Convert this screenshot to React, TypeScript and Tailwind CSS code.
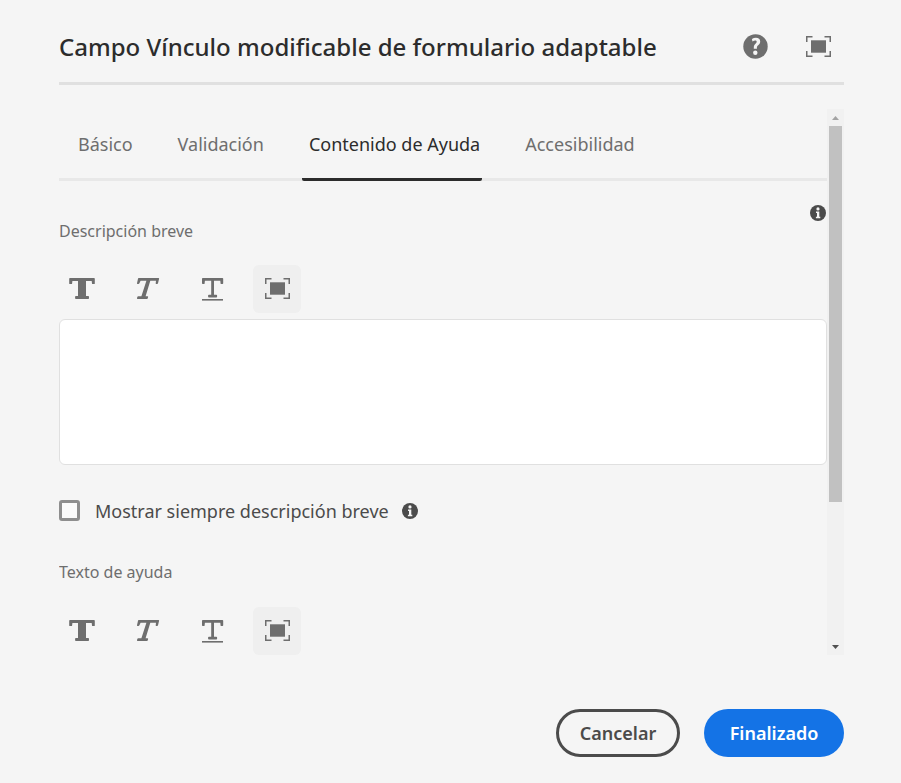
import React from "react";

function HelpIcon() {
  return (
    <svg width="26" height="26" viewBox="0 0 26 26" aria-hidden="true">
      <circle cx="12.500" cy="12.500" r="12.200" fill="#6e6e6e" />
      <path
        d="M8.900 5C10.200 4.200 11.500 3.800 12.900 3.800c2.600 0 4.300 1.400 4.300 3.600 0 1.700-.9 2.800-2 3.800-1 .9-1.300 1.400-1.300 2.300v1.200h-3.100v-1.300c0-1.600.7-2.600 1.700-3.600.8-.8 1.200-1.300 1.200-2 0-.8-.6-1.200-1.500-1.200-.9 0-1.700.3-2.700.9z"
        fill="#f5f5f5"
      />
      <circle cx="12.300" cy="18.700" r="2.200" fill="#f5f5f5" />
    </svg>
  );
}

function FullscreenIcon() {
  return (
    <svg width="25" height="21" viewBox="0 0 25 21" aria-hidden="true">
      <path
        d="M.75 6V.75H6.500M18.500.75h5.750V6M24.250 15v5.250H18.500M6.500 20.250H.75V15"
        fill="none"
        stroke="#6e6e6e"
        strokeWidth="1.500"
      />
      <rect x="5" y="4.300" width="15" height="12.400" fill="#6e6e6e" />
    </svg>
  );
}

function BoldIcon() {
  return (
    <svg width="26" height="24" viewBox="0 0 26 24" aria-hidden="true">
      <path
        d="M1 0h24q.8 0 .8.8V5.400q0 .7-.7.7h-1.400q-.7 0-.7-.6L22.700 3H17v15h2.200q.8 0 .8.800v1.400q0 .8-.8.8H6.900q-.8 0-.8-.8v-1.400q0-.8.8-.8H9V3H3.400L3.100 5.500q0 .6-.7.600H1q-.8 0-.8-.7V.8Q.2 0 1 0z"
        fill="#6e6e6e"
      />
    </svg>
  );
}

function ItalicIcon() {
  return (
    <svg width="24" height="24" viewBox="0 0 24 24" aria-hidden="true">
      <path
        d="M2.700 0h19.800q.8 0 .6.8L22 5.300q-.2.700-.9.700h-.9q-.6 0-.5-.7l.3-2.500h-5.700L9.600 18.300h1.900q.8 0 .6.700l-.3 1.300q-.2.700-.9.700H1.600q-.8 0-.6-.7l.3-1.300q.2-.7.900-.7h3.200L10.400 2.800H4.600L3.400 5.300Q3.100 6 2.400 6h-.9q-.7 0-.5-.7L2 .8Q2.100 0 2.700 0z"
        fill="#6e6e6e"
      />
    </svg>
  );
}

function UnderlineIcon() {
  return (
    <svg width="22" height="24" viewBox="0 0 22 24" aria-hidden="true">
      <path
        d="M.8 0h19.600q.8 0 .8.800V5.300q0 .7-.7.700h-1.200q-.7 0-.7-.6L18.300 2.700H12v14.100h2.300q.8 0 .8.700v1.200q0 .8-.8.800H6.900q-.8 0-.8-.8v-1.200q0-.7.800-.7H9.200V2.700H2.900L2.600 5.400q0 .6-.7.600H.7Q0 6 0 5.300V.8Q0 0 .8 0z"
        fill="#6e6e6e"
      />
      <rect x="0" y="21" width="21" height="1.600" fill="#6e6e6e" />
    </svg>
  );
}

function InfoIcon() {
  return (
    <svg width="16" height="16" viewBox="0 0 16 16" aria-hidden="true">
      <circle cx="8" cy="8" r="8" fill="#4b4b4b" />
      <circle cx="8" cy="3.900" r="1.600" fill="#f5f5f5" />
      <path d="M6 6.500h3.300v5.200H10.300v1.500H5.900v-1.500h1.100V8H6z" fill="#f5f5f5" />
    </svg>
  );
}

function RichTextToolbar() {
  const button = "flex size-12 items-start justify-center rounded-md pt-[13px]";
  return (
    <div className="-ml-px flex shrink-0 gap-[17px]" role="toolbar" aria-label="Formato">
      <button type="button" aria-label="Negrita" className={button}>
        <BoldIcon />
      </button>
      <button type="button" aria-label="Cursiva" className={`${button} pl-[2px]`}>
        <ItalicIcon />
      </button>
      <button type="button" aria-label="Subrayado" className={`${button} pl-[2px]`}>
        <UnderlineIcon />
      </button>
      <button type="button" aria-label="Pantalla completa" className={`${button} bg-[#efefef]`}>
        <FullscreenIcon />
      </button>
    </div>
  );
}

const tabs = [
  { label: "Básico", selected: false },
  { label: "Validación", selected: false },
  { label: "Contenido de Ayuda", selected: true },
  { label: "Accesibilidad", selected: false },
];

function Tabs() {
  return (
    <div role="tablist" className="flex h-[72px] shrink-0 gap-[36px] border-b-[3px] border-[#e8e8e8] pl-3">
      {tabs.map((tab) => (
        <button
          key={tab.label}
          type="button"
          role="tab"
          aria-selected={tab.selected}
          className={
            tab.selected
              ? "-mb-[3px] rounded-b-xs border-b-[3px] border-[#2c2c2c] pr-[2px] pl-[7px] text-lg text-[#2c2c2c]"
              : "-mb-[3px] border-b-[3px] border-transparent pr-[2px] pl-[7px] text-lg text-[#6e6e6e]"
          }
        >
          {tab.label}
        </button>
      ))}
    </div>
  );
}

function Scrollbar() {
  return (
    <div aria-hidden="true" className="flex w-[17px] shrink-0 flex-col bg-[#f1f1f1]">
      <div className="flex h-[17px] items-center justify-center">
        <svg width="7" height="4" viewBox="0 0 7 4">
          <path d="M0 4L3.500 0 7 4z" fill="#a3a3a3" />
        </svg>
      </div>
      <div className="flex-1 px-[2px]">
        <div className="h-[73.5%] bg-[#c1c1c1]" />
      </div>
      <div className="flex h-[17px] items-center justify-center">
        <svg width="7" height="4" viewBox="0 0 7 4">
          <path d="M0 0L3.500 4 7 0z" fill="#505050" />
        </svg>
      </div>
    </div>
  );
}

export default function App() {
  return (
    <div className="flex h-screen flex-col bg-[#f5f5f5] pr-[57px] pb-[26px] pl-[59px] font-['Noto_Sans','Open_Sans',sans-serif]">
      <header className="flex h-[85px] shrink-0 items-center border-b-[3px] border-[#e0e0e0] pt-3">
        <h1 className="flex-1 text-2xl font-medium whitespace-nowrap text-[#2c2c2c]">
          Campo Vínculo modificable de formulario adaptable
        </h1>
        <button type="button" aria-label="Ayuda">
          <HelpIcon />
        </button>
        <button type="button" aria-label="Pantalla completa" className="mr-[13px] ml-[37px] pb-[2px]">
          <FullscreenIcon />
        </button>
      </header>

      <div className="mt-6 flex min-h-0 flex-1">
        <main className="flex min-w-0 flex-1 flex-col overflow-hidden">
          <Tabs />
          <div className="flex shrink-0 items-start justify-between pt-6">
            <label htmlFor="short-description" className="pt-[14px] text-base leading-6 text-[#6e6e6e]">
              Descripción breve
            </label>
            <button type="button" aria-label="Información" className="mr-px">
              <InfoIcon />
            </button>
          </div>
          <div className="mt-[22px]">
            <RichTextToolbar />
          </div>
          <textarea
            id="short-description"
            className="mt-[6px] h-[146px] w-full shrink-0 resize-none rounded-md border border-[#e0e0e0] bg-white p-3 text-base"
          />
          <div className="mt-8 flex h-[27px] shrink-0 items-center">
            <input
              id="always-show"
              type="checkbox"
              className="size-[21px] appearance-none rounded-[3px] border-[3px] border-[#8e8e8e] bg-[#fafafa]"
            />
            <label htmlFor="always-show" className="ml-[15px] text-lg text-[#4b4b4b]">
              Mostrar siempre descripción breve
            </label>
            <button type="button" aria-label="Información" className="ml-[13px]">
              <InfoIcon />
            </button>
          </div>
          <label htmlFor="help-text" className="mt-9 shrink-0 text-base leading-6 text-[#6e6e6e]">
            Texto de ayuda
          </label>
          <div className="mt-[23px]">
            <RichTextToolbar />
          </div>
          <textarea
            id="help-text"
            className="mt-[6px] h-[146px] w-full shrink-0 resize-none rounded-md border border-[#e0e0e0] bg-white p-3 text-base"
          />
        </main>
        <Scrollbar />
      </div>

      <footer className="flex shrink-0 justify-end gap-6 pt-[54px]">
        <button
          type="button"
          className="h-12 w-[124px] rounded-full border-[3px] border-[#4b4b4b] text-lg font-semibold text-[#4b4b4b]"
        >
          Cancelar
        </button>
        <button type="button" className="h-12 w-[140px] rounded-full bg-[#1473e6] text-lg font-semibold text-white">
          Finalizado
        </button>
      </footer>
    </div>
  );
}
